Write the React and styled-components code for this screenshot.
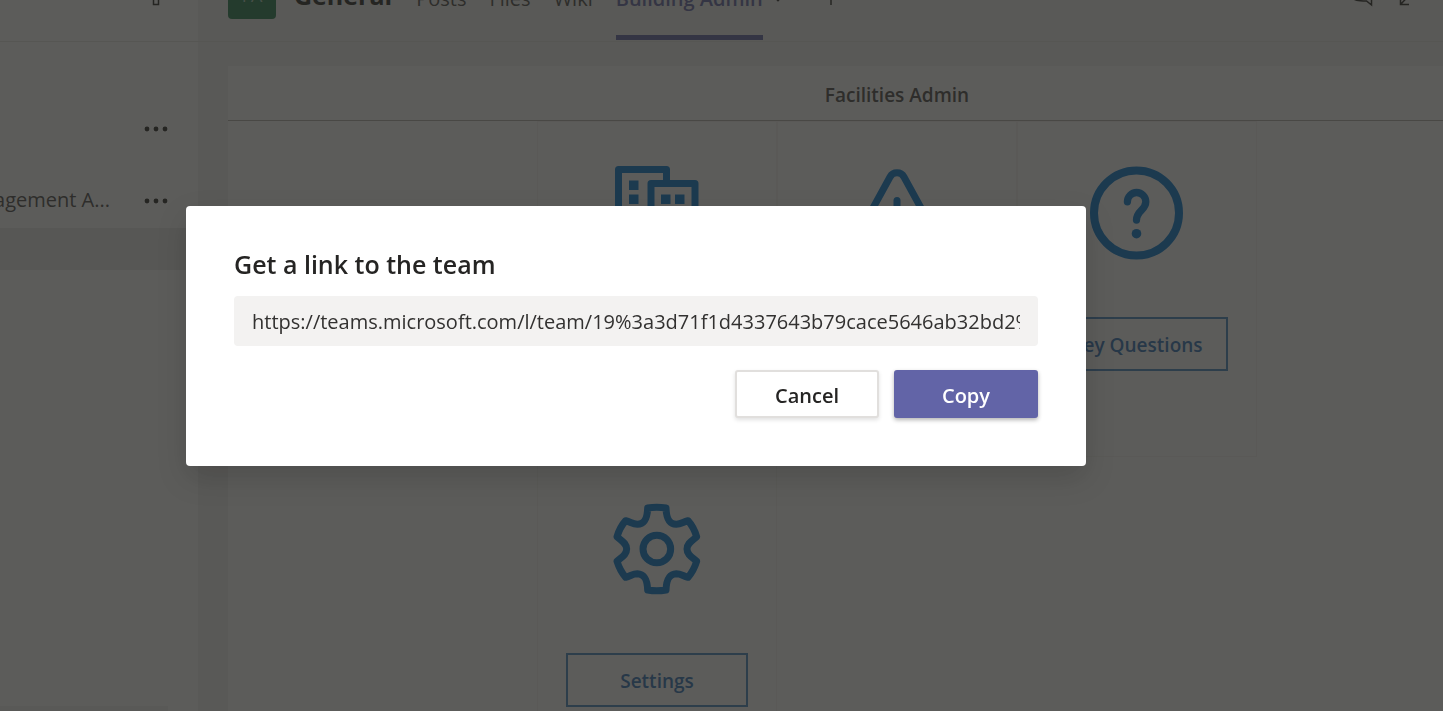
import React from "react";
import styled, { createGlobalStyle } from "styled-components";

const GlobalStyle = createGlobalStyle`
  * { box-sizing: border-box; }
  html, body { margin: 0; height: 100%; overflow: hidden; }
  body {
    font-family: "Open Sans", "Noto Sans", sans-serif;
    font-size: 20px;
    color: #252423;
    background: #f3f2f1;
  }
  button, input { font: inherit; color: inherit; }
`;

const Shell = styled.div`
  display: flex;
  height: 100vh;
  overflow: hidden;
`;

const Sidebar = styled.aside`
  display: flex;
  flex-direction: column;
  flex: 0 0 198px;
  min-width: 0;
  background: #fff;
`;

const TopBar = styled.div`
  display: flex;
  align-items: flex-end;
  flex: none;
  height: 42px;
  overflow: hidden;
  border-bottom: 1px solid #e8e6e4;
`;

const TopBarRow = styled.div`
  display: flex;
  align-items: center;
  flex: 1;
  height: 92px;
  padding: ${(p) => p.$pad};
  justify-content: ${(p) => (p.$end ? "flex-end" : "flex-start")};
`;

const IconButton = styled.button`
  display: flex;
  align-items: center;
  justify-content: center;
  flex: none;
  width: ${(p) => p.$size || 24}px;
  height: 24px;
  padding: 0;
  border: 0;
  background: none;
  color: #252423;
`;

const TeamList = styled.ul`
  display: flex;
  flex-direction: column;
  gap: 18px;
  margin: 0;
  padding: 60px 0 0;
  list-style: none;
`;

const TeamRow = styled.li`
  display: flex;
  align-items: center;
  justify-content: flex-end;
  gap: 34px;
  height: 54px;
  padding-right: 30px;
  overflow: hidden;
  white-space: nowrap;
  color: #484644;
`;

const TeamName = styled.span`
  padding-bottom: 4px;
`;

const ActiveChannel = styled.div`
  height: 42px;
  background: #ebebea;
`;

const SidebarRule = styled.div`
  height: 5px;
  margin: auto 30px 0 0;
  background: #f3f2f1;
`;

const Main = styled.main`
  flex: 1;
  min-width: 0;
`;

const Avatar = styled.div`
  flex: none;
  width: 48px;
  height: 48px;
  border-radius: 4px;
  background: #237b4b;
  color: #a9cdb9;
  font-size: 18px;
  line-height: 48px;
  text-align: center;
`;

const Channel = styled.h1`
  margin: 0 0 0 18px;
  font-size: 25px;
  line-height: 34px;
  font-weight: 700;
`;

const Tabs = styled.nav`
  display: flex;
  align-self: stretch;
  gap: 23px;
  margin: 0 0 1px 24px;
`;

const Tab = styled.a`
  display: flex;
  align-items: center;
  border-bottom: 5px solid ${(p) => (p.$active ? "#6264a7" : "transparent")};
  padding-top: 12px;
  color: ${(p) => (p.$active ? "#6264a7" : "#484644")};
  font-weight: ${(p) => (p.$active ? 600 : 400)};
  text-decoration: none;
`;

const Tools = styled.div`
  display: flex;
  gap: 22px;
  margin-left: auto;
`;

/* The tab content is wider than the window and runs off its right side. */
const Panel = styled.section`
  margin: 24px -123px 0 30px;
  background: #fff;
`;

const PanelTitle = styled.h2`
  margin: 0;
  padding: 15px 0 11px;
  border-bottom: 1px solid #b3b0ad;
  color: #484644;
  font-size: 19px;
  line-height: 28px;
  font-weight: 600;
  text-align: center;
`;

const CardGrid = styled.div`
  display: grid;
  grid-template-columns: repeat(3, 240px);
  justify-content: center;
  min-height: 100vh;
  align-content: start;
`;

const Card = styled.article`
  display: flex;
  flex-direction: column;
  align-items: center;
  gap: 56px;
  height: 336px;
  padding-top: 43px;
  border: 1px solid #f5f4f3;
  color: #0078d4;
`;

const CardButton = styled.button`
  width: 182px;
  height: 54px;
  padding: 2px 0 0;
  border: 2px solid #4586c4;
  background: #fff;
  color: #2f6fb8;
  font-size: 19px;
  font-weight: 600;
`;

const Backdrop = styled.div`
  position: fixed;
  inset: 0;
  display: flex;
  align-items: center;
  justify-content: center;
  padding: 0 171px 39px 0;
  background: rgba(37, 37, 35, 0.75);
`;

const Dialog = styled.form`
  display: flex;
  flex-direction: column;
  width: 900px;
  max-width: 100%;
  padding: 40px 48px 48px;
  border-radius: 4px;
  background: #fff;
  box-shadow: 0 12px 30px rgba(0, 0, 0, 0.15);
`;

const DialogTitle = styled.label`
  margin-bottom: 14px;
  font-size: 25px;
  line-height: 36px;
  font-weight: 600;
`;

const LinkField = styled.input`
  width: 100%;
  height: 50px;
  padding: 0 18px;
  border: 0;
  border-radius: 4px;
  background: #f3f2f1;
  color: #323130;
  outline: 0;
`;

const Actions = styled.div`
  display: flex;
  justify-content: flex-end;
  gap: 15px;
  margin-top: 24px;
`;

const ActionButton = styled.button`
  width: 144px;
  height: 48px;
  padding: 2px 0 0;
  border: 2px solid ${(p) => (p.$primary ? "#6264a7" : "#e1dfdd")};
  border-radius: 3px;
  background: ${(p) => (p.$primary ? "#6264a7" : "#fff")};
  color: ${(p) => (p.$primary ? "#fff" : "#252423")};
  font-weight: 600;
  box-shadow: 0 2px 4px rgba(0, 0, 0, ${(p) => (p.$primary ? 0.3 : 0.12)});
`;

const BigIcon = ({ viewBox = "0 0 96 96", stroke = 7, children }) => (
  <svg width="96" height="96" viewBox={viewBox} fill="none" stroke="currentColor"
    strokeWidth={stroke} strokeLinecap="round" strokeLinejoin="round" aria-hidden="true">
    {children}
  </svg>
);

const BuildingsIcon = () => (
  <BigIcon>
    <path d="M9.5 91V4.5H57.5V18M42 91V18.5H86V91H9.5" />
    <g fill="currentColor" stroke="none">
      <path d="M20 15.5h9.500v9.500H20zM20 29.500h9.500v9.500H20zM20 43h9.500v9.500H20z" />
      <path d="M52 29.500h9.500v9.500H52zM66 29.500h9.500v9.500H66zM52 43h9.500v9.500H52zM66 43h9.500v9.500H66z" />
    </g>
  </BigIcon>
);

const WarningIcon = () => (
  <BigIcon>
    <path d="M41 12a8 8 0 0 1 14 0L89 74a8 8 0 0 1-7 12H14a8 8 0 0 1-7-12z" />
    <path d="M48 35.500V58" />
    <circle cx="48" cy="70" r="4.500" fill="currentColor" stroke="none" />
  </BigIcon>
);

const QuestionIcon = () => (
  <BigIcon stroke={7.3}>
    <circle cx="47.500" cy="48" r="42.500" strokeWidth="8" />
    <path d="M38.400 36.800a9.200 9.300 0 0 1 18.400 0c0 8.600-9.300 8.800-9.300 18.300" />
    <circle cx="47.500" cy="68.700" r="4.800" fill="currentColor" stroke="none" />
  </BigIcon>
);

const GearIcon = () => (
  <BigIcon viewBox="236 153 288 288" stroke={21}>
    <path d="M352 174Q379 169 407 174C408 198 412 222 438 223C452 223 458 216 473 212Q490 231 499 260C488 271 470 278 470 297C470 316 488 323 499 334Q490 363 473 382C458 378 452 371 438 371C412 372 408 396 407 420Q379 425 352 420C351 396 347 372 321 371C307 371 301 378 286 382Q269 363 260 334C271 323 289 316 289 297C289 278 271 271 260 260Q269 231 286 212C301 216 307 223 321 223C347 222 351 198 352 174Z" />
    <circle cx="379.500" cy="297" r="41.500" />
  </BigIcon>
);

const LineIcon = ({ children, size = 24, width = 1.5 }) => (
  <svg width={size} height={size} viewBox="0 0 24 24" fill="none" stroke="currentColor"
    strokeWidth={width} strokeLinejoin="miter" aria-hidden="true">
    {children}
  </svg>
);

const Dots = () => (
  <svg width="24" height="24" viewBox="0 0 24 24" fill="currentColor" aria-hidden="true">
    <circle cx="3" cy="12" r="2.400" />
    <circle cx="12" cy="12" r="2.400" />
    <circle cx="21" cy="12" r="2.400" />
  </svg>
);

const cards = [
  { name: "Buildings", Icon: BuildingsIcon },
  { name: "Warnings", Icon: WarningIcon },
  { name: "Key Questions", Icon: QuestionIcon, action: true },
  { name: "Settings", Icon: GearIcon, action: true },
];

export default function App() {
  return (
    <>
      <GlobalStyle />
      <Shell>
        <Sidebar>
          <TopBar>
            <TopBarRow $end $pad="0 30px 0 0">
              <IconButton aria-label="Filter">
                <LineIcon><path d="M2 2.500H22L14.500 12.500V21.500H9.500V12.500Z" /></LineIcon>
              </IconButton>
            </TopBarRow>
          </TopBar>
          <TeamList>
            <TeamRow>
              <IconButton aria-label="More options"><Dots /></IconButton>
            </TeamRow>
            <TeamRow>
              <TeamName>Management A...</TeamName>
              <IconButton aria-label="More options"><Dots /></IconButton>
            </TeamRow>
          </TeamList>
          <ActiveChannel />
          <SidebarRule />
        </Sidebar>
        <Main>
          <TopBar>
            <TopBarRow $pad="0 23px 0 30px">
              <Avatar>FA</Avatar>
              <Channel>General</Channel>
              <Tabs>
                <Tab href="#posts">Posts</Tab>
                <Tab href="#files">Files</Tab>
                <Tab href="#wiki">Wiki</Tab>
                <Tab href="#admin" $active>Building Admin</Tab>
              </Tabs>
              <IconButton aria-label="Tab options" $size={30}>
                <LineIcon size={14} width={3}><path d="M5 14L12 21.500L19 14" /></LineIcon>
              </IconButton>
              <IconButton aria-label="Add a tab" $size={76}>
                <LineIcon><path d="M12 2V22M2 12H22" /></LineIcon>
              </IconButton>
              <Tools>
                <IconButton aria-label="Conversation">
                  <LineIcon><path d="M2.500 4V14C3.500 17.500 8 17.800 16.500 18L21.500 22V3H3.500" /></LineIcon>
                </IconButton>
                <IconButton aria-label="Expand">
                  <LineIcon><path d="M4.500 12V21.500H13M4.500 21.500L20 5" /></LineIcon>
                </IconButton>
              </Tools>
            </TopBarRow>
          </TopBar>
          <Panel>
            <PanelTitle>Facilities Admin</PanelTitle>
            <CardGrid>
              {cards.map(({ name, Icon, action }) => (
                <Card key={name} aria-label={name}>
                  <Icon />
                  {action && <CardButton>{name}</CardButton>}
                </Card>
              ))}
            </CardGrid>
          </Panel>
        </Main>
      </Shell>
      <Backdrop>
        <Dialog role="dialog" aria-modal="true" onSubmit={(e) => e.preventDefault()}>
          <DialogTitle htmlFor="team-link">Get a link to the team</DialogTitle>
          <LinkField
            id="team-link"
            readOnly
            value="https://teams.microsoft.com/l/team/19%3a3d71f1d4337643b79cace5646ab32bd2%40thread.tacv2"
          />
          <Actions>
            <ActionButton type="button">Cancel</ActionButton>
            <ActionButton type="submit" $primary>Copy</ActionButton>
          </Actions>
        </Dialog>
      </Backdrop>
    </>
  );
}
